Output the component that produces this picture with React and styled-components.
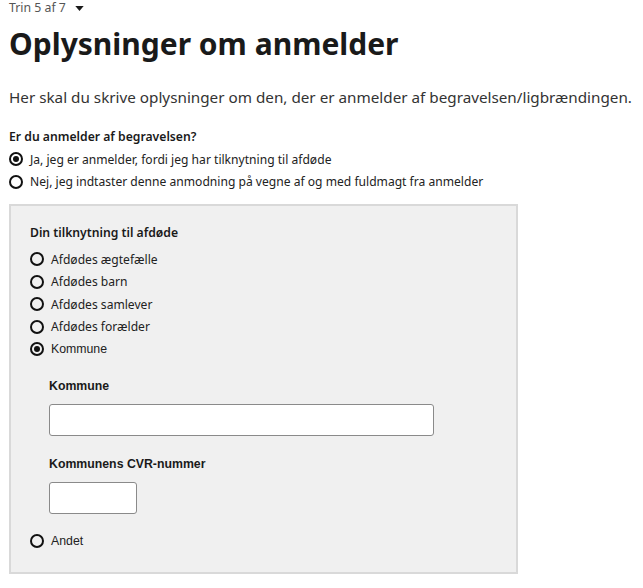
import React, { useState } from 'react';
import styled, { createGlobalStyle } from 'styled-components';

const GlobalStyle = createGlobalStyle`
  body {
    margin: 0;
    background: #fff;
    font-family: "Noto Sans", sans-serif;
    color: #1a1a1a;
  }
`;

const relations = [
  'Afdødes ægtefælle',
  'Afdødes barn',
  'Afdødes samlever',
  'Afdødes forælder',
];

const Radio = ({ checked, label, arial, onClick }) => (
  <RadioRow onClick={onClick}>
    <Circle checked={checked} />
    <RadioLabel arial={arial}>{label}</RadioLabel>
  </RadioRow>
);

const App = () => {
  const [isReporter, setIsReporter] = useState(true);
  const [relation, setRelation] = useState('Kommune');

  return (
    <Page>
      <GlobalStyle />
      <Step>
        Trin 5 af 7
        <Caret viewBox='0 0 10 6'><path d='M0 0h10L5 6z' fill='#1a1a1a' /></Caret>
      </Step>
      <Title>Oplysninger om anmelder</Title>
      <Intro>Her skal du skrive oplysninger om den, der er anmelder af begravelsen/ligbrændingen.</Intro>

      <Question>Er du anmelder af begravelsen?</Question>
      <RadioGroup>
        <Radio checked={isReporter} onClick={() => setIsReporter(true)} label='Ja, jeg er anmelder, fordi jeg har tilknytning til afdøde' />
        <Radio checked={!isReporter} onClick={() => setIsReporter(false)} label='Nej, jeg indtaster denne anmodning på vegne af og med fuldmagt fra anmelder' />
      </RadioGroup>

      <Panel>
        <PanelQuestion>Din tilknytning til afdøde</PanelQuestion>
        <RadioGroup>
          {relations.map((item) => (
            <Radio key={item} checked={relation === item} onClick={() => setRelation(item)} label={item} />
          ))}
          <Radio arial checked={relation === 'Kommune'} onClick={() => setRelation('Kommune')} label='Kommune' />
        </RadioGroup>
        {relation === 'Kommune' && (
          <Nested>
            <Field>
              <FieldLabel>Kommune</FieldLabel>
              <Input width='385px' />
            </Field>
            <Field>
              <FieldLabel>Kommunens CVR-nummer</FieldLabel>
              <Input width='88px' />
            </Field>
          </Nested>
        )}
        <Radio arial checked={relation === 'Andet'} onClick={() => setRelation('Andet')} label='Andet' />
      </Panel>
    </Page>
  );
};

const Page = styled.div`
  padding: 0 9px;
`;

const Step = styled.div`
  display: flex;
  align-items: center;
  gap: 9px;
  height: 16px;
  font-size: 12.3px;
  line-height: 16px;
  color: #555;
`;

const Caret = styled.svg`
  width: 9px;
  height: 5px;
  margin-top: 1px;
`;

const Title = styled.h1`
  margin: 10px 0 0;
  font-size: 30px;
  line-height: 36px;
  font-weight: 700;
  color: #1a1a1a;
`;

const Intro = styled.p`
  margin: 23px 0 0;
  font-size: 15.25px;
  line-height: 24px;
  color: #333;
  white-space: nowrap;
`;

const Question = styled.div`
  margin: 19px 0 2px;
  font-size: 12.2px;
  line-height: 18px;
  font-weight: 600;
  color: #1a1a1a;
`;

const PanelQuestion = styled(Question)`
  margin: 18px 0 6px;
`;

const RadioGroup = styled.div`
  display: flex;
  flex-direction: column;
`;

const RadioRow = styled.label`
  display: flex;
  align-items: center;
  gap: 7px;
  height: 22.5px;
  cursor: pointer;
`;

const Circle = styled.span`
  box-sizing: border-box;
  width: 14px;
  height: 14px;
  border-radius: 50%;
  border: 2px solid #111;
  display: flex;
  align-items: center;
  justify-content: center;
  flex-shrink: 0;
  &::after {
    content: '';
    width: 6px;
    height: 6px;
    border-radius: 50%;
    background: #111;
    display: ${props => props.checked ? 'block' : 'none'};
  }
`;

const RadioLabel = styled.span`
  font-size: ${props => props.arial ? '12.3px' : '12.1px'};
  color: #222;
  font-family: ${props => props.arial ? '"Liberation Sans", Arial, sans-serif' : '"Noto Sans", sans-serif'};
`;

const Panel = styled.div`
  box-sizing: border-box;
  width: 509px;
  margin-top: 11px;
  padding: 0 19px 20px 19px;
  background: #f0f0f0;
  border: 2px solid #d9d9d9;
`;

const Nested = styled.div`
  display: flex;
  flex-direction: column;
  gap: 21px;
  padding: 18px 0 16px 19px;
`;

const Field = styled.div`
  display: flex;
  flex-direction: column;
  gap: 11px;
`;

const FieldLabel = styled.div`
  font-family: "Liberation Sans", Arial, sans-serif;
  font-size: 12.3px;
  line-height: 14px;
  font-weight: 700;
  color: #1a1a1a;
`;

const Input = styled.input`
  box-sizing: border-box;
  width: ${props => props.width};
  height: 32px;
  border: 1px solid #8a8a8a;
  border-radius: 3px;
  background: #fff;
`;

export default App;
